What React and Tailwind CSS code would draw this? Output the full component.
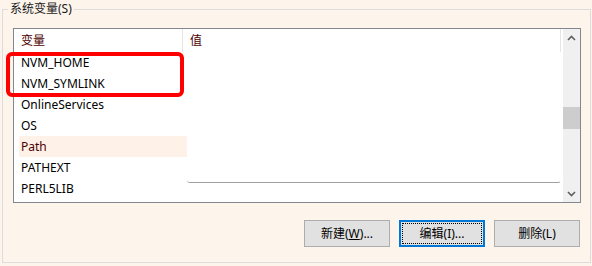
const rows = ['NVM_HOME', 'NVM_SYMLINK', 'OnlineServices', 'OS', 'Path', 'PATHEXT', 'PERL5LIB'];

const Chevron = ({ up }) => (
  <svg width="9" height="6" viewBox="0 0 9 6" className="block">
    <path
      d={up ? 'M1 5 L4.5 1.5 L8 5' : 'M1 1 L4.5 4.5 L8 1'}
      fill="none"
      stroke="#606060"
      strokeWidth="1.6"
    />
  </svg>
);

const Button = ({ label, hotkey, suffix, focused, underline }) => (
  <button
    className={
      'w-[86px] h-[27px] bg-[#e1e1e1] flex items-center justify-center text-[12px] text-black ' +
      (focused ? 'border-2 border-[#0078d7] p-[1px]' : 'border border-[#adadad]')
    }
  >
    <span
      className={
        'w-full h-full flex items-center justify-center ' +
        (focused ? 'border border-dotted border-black' : '')
      }
    >
      {label}(<span className={underline ? 'underline' : ''}>{hotkey}</span>){suffix}
    </span>
  </button>
);

export default function App() {
  return (
    <div
      className="w-[592px] h-[266px] bg-[#fdf4ec] px-[2px] overflow-hidden"
      style={{ fontFamily: '"Noto Sans", "Noto Sans CJK SC", sans-serif' }}
    >
      <fieldset className="w-[589px] h-[263px] border border-[#dcdcdc] relative">
        <legend className="ml-[5px] px-[2px] text-[12px] leading-[18px] text-[#1a1a1a]">
          系统变量(S)
        </legend>

        <div className="ml-[10px] mt-[10px] w-[568px] h-[175px] border border-[#828790] bg-white flex relative">
          <div className="flex-1 relative">
            {/* header */}
            <div className="h-[23px] flex text-[12px] leading-[24px]">
              <div className="w-[169px] pl-[7px] text-[#4d0000] border-r border-[#e5e5e5]">变量</div>
              <div className="w-[378px] pl-[7px] text-[#4d0000] border-r border-[#e5e5e5]">值</div>
            </div>
            {rows.map((r) => (
              <div key={r} className="h-[21px] flex">
                <div
                  className={
                    'ml-[5px] w-[168px] pl-[2px] text-[12px] leading-[22px] ' +
                    (r === 'Path' ? 'bg-[#fdf1e8] text-[#4d0000]' : 'text-black')
                  }
                >
                  {r}
                </div>
              </div>
            ))}

            {/* value pane edge */}
            <div className="absolute left-[173px] top-[23px] w-[374px] h-[131px] border-b border-r border-[#a0a0a0] rounded-bl-[3px] rounded-br-[3px] border-r-white" />

            {/* annotation */}
            <div className="absolute left-[-8px] top-[23px] w-[178px] h-[45px] border-4 border-[#ff0000] rounded-[6px]" />
          </div>

          {/* scrollbar */}
          <div className="w-[17px] bg-[#f0f0f0] flex flex-col">
            <div className="h-[17px] flex items-center justify-center">
              <Chevron up />
            </div>
            <div className="flex-1 pt-[61px]">
              <div className="h-[22px] bg-[#cdcdcd]" />
            </div>
            <div className="h-[17px] flex items-center justify-center">
              <Chevron />
            </div>
          </div>
        </div>

        <div className="mt-[17px] mr-[10px] flex justify-end gap-[9px]">
          <Button label="新建" hotkey="W" suffix="..." underline />
          <Button label="编辑" hotkey="I" suffix="..." focused />
          <Button label="删除" hotkey="L" suffix="" />
        </div>
      </fieldset>
    </div>
  );
}
